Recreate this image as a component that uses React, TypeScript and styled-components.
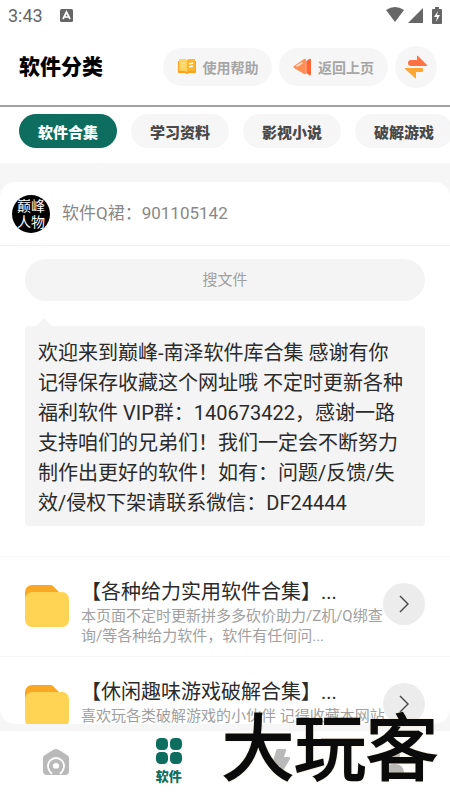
import React from "react";
import styled, { createGlobalStyle } from "styled-components";

const GlobalStyle = createGlobalStyle`
  * { box-sizing: border-box; }
  body {
    margin: 0;
    background: #fff;
    font-family: Roboto, "Noto Sans CJK SC", sans-serif;
    color: #2b2b2b;
  }
  button, input { font: inherit; border: 0; margin: 0; padding: 0; }
  svg { display: block; flex: none; }
`;

const Screen = styled.div`
  position: relative;
  display: flex;
  flex-direction: column;
  height: 100vh;
  overflow: hidden;
`;

const StatusBar = styled.div`
  display: flex;
  flex: none;
  align-items: center;
  height: 30px;
  padding: 0 8px;
  font-size: 18px;
  color: #666;
`;

const StatusIcons = styled.div`
  display: flex;
  align-items: center;
  gap: 4px;
  margin-left: auto;
`;

const StatusBadge = styled.div`
  margin-left: 17px;
`;

const BatterySlot = styled.div`
  margin-left: 5px;
`;

const Header = styled.header`
  display: flex;
  flex: none;
  align-items: center;
  gap: 7px;
  height: 77px;
  padding: 0 13px 2px 19px;
  border-bottom: 2px solid #a2a2a2;
`;

const PageTitle = styled.h1`
  flex: 1;
  margin: 0;
  font-size: 21px;
  line-height: 30px;
  font-weight: 900;
  color: #000;
  white-space: nowrap;
`;

const HeaderButton = styled.button`
  display: flex;
  align-items: center;
  justify-content: center;
  gap: 6px;
  width: 109px;
  height: 38px;
  border-radius: 19px;
  background: #f6f6f6;
  font-size: 14px;
  font-weight: 700;
  color: #a6a6a6;
  white-space: nowrap;
`;

const RoundButton = styled.button<{ $tone: string }>`
  display: flex;
  flex: none;
  align-items: center;
  justify-content: center;
  width: 42px;
  height: 42px;
  border-radius: 50%;
  background: ${(p) => p.$tone};
`;

const Tabs = styled.nav`
  display: flex;
  flex: none;
  gap: 14px;
  padding: 7px 0 15px 19px;
  overflow: hidden;
`;

const Tab = styled.button<{ $active?: boolean }>`
  flex: none;
  width: 98px;
  height: 34px;
  border-radius: 17px;
  font-size: 15px;
  font-weight: 900;
  background: ${(p) => (p.$active ? "#0d6e5f" : "#f6f6f6")};
  color: ${(p) => (p.$active ? "#fff" : "#4a4a4a")};
`;

const Content = styled.main`
  display: flex;
  flex: 1;
  min-height: 0;
  padding: 19px 0 7px;
  background: #f6f6f6;
`;

const Card = styled.section`
  flex: 1;
  min-width: 0;
  overflow: hidden;
  border-radius: 15px;
  background: #fff;
`;

const Owner = styled.div`
  display: flex;
  align-items: center;
  gap: 12px;
  height: 64px;
  padding: 0 12px;
  border-bottom: 1px solid #f1f1f1;
  font-size: 17px;
  color: #888;
`;

const Avatar = styled.div`
  display: flex;
  align-items: center;
  justify-content: center;
  width: 38px;
  height: 38px;
  border-radius: 50%;
  background: #000;
  color: #fff;
  font-size: 14px;
  line-height: 16px;
  text-align: center;
  overflow: hidden;
`;

const OwnerText = styled.div`
  padding-bottom: 4px;
`;

const Intro = styled.div`
  padding: 13px 25px 30px;
  border-bottom: 1px solid #f6f6f6;
`;

const Search = styled.input`
  display: block;
  width: 100%;
  height: 42px;
  border-radius: 21px;
  background: #f4f4f4;
  font-size: 15px;
  text-align: center;
  outline: 0;
  &::placeholder { color: #a0a0a0; opacity: 1; }
`;

const Notice = styled.p`
  position: relative;
  margin: 25px 0 0;
  padding: 12px 12px 8px 13px;
  border-radius: 4px;
  background: #f4f4f4;
  font-size: 20px;
  line-height: 30px;
  &::before {
    content: "";
    position: absolute;
    left: 11px;
    top: -8px;
    border: 8px solid transparent;
    border-top: 0;
    border-bottom-color: #f4f4f4;
  }
`;

const Entry = styled.article`
  display: flex;
  height: 100px;
  padding: 0 25px;
  border-bottom: 1px solid #f6f6f6;
`;

const EntryIcon = styled.div`
  margin-top: 28px;
`;

const EntryText = styled.div`
  flex: 1;
  min-width: 0;
  margin: 21px -4px 0 12px;
`;

const EntryTitle = styled.h2`
  margin: 0;
  font-size: 20px;
  line-height: 28px;
  font-weight: 400;
  white-space: nowrap;
`;

const EntryNote = styled.p`
  margin: 0;
  font-size: 15px;
  line-height: 20px;
  color: #a0a0a0;
`;

const EntryAction = styled.div`
  margin-top: 26px;
`;

const BottomNav = styled.nav`
  display: grid;
  flex: none;
  grid-template-columns: repeat(4, 1fr);
  height: 69px;
  background: #fff;
`;

const NavItem = styled.button<{ $active?: boolean }>`
  display: flex;
  flex-direction: column;
  align-items: center;
  justify-content: center;
  gap: 4px;
  padding-bottom: 7px;
  background: none;
  font-size: 13px;
  line-height: 18px;
  font-weight: 900;
  color: ${(p) => (p.$active ? "#0d6e5f" : "#b9b9b9")};
`;

const Watermark = styled.div`
  position: absolute;
  right: 12px;
  bottom: 10px;
  font-size: 72px;
  line-height: 80px;
  font-weight: 400;
  color: #0b0b0b;
  -webkit-text-stroke: 2px #0b0b0b;
  text-shadow: 0 0 3px #d9cc98;
  white-space: nowrap;
  pointer-events: none;
`;

const BookIcon = () => (
  <svg width="20" height="17" viewBox="0 0 20 17">
    <path d="M1 3h18v11a1 1 0 0 1-1 1h-6l-2 1-2-1H2a1 1 0 0 1-1-1z" fill="#ff9f1e" />
    <path d="M2 1h6l2 1v12l-2-1H3a1 1 0 0 1-1-1z" fill="#ffd35c" />
    <path d="M18 1h-6l-2 1v12l2-1h5a1 1 0 0 0 1-1z" fill="#ffb62c" />
    <path d="M4 5h4M4 8h4" stroke="#ffe9b0" strokeWidth="1.2" />
    <path d="m12 6 4-1M12 9l4-1" stroke="#fff" strokeWidth="1.4" />
  </svg>
);

const RewindIcon = () => (
  <svg width="19" height="18" viewBox="0 0 19 18">
    <path d="M7 8 16 1q2-1 2 1v14q0 2-2 1l-9-7z" fill="#ff6635" />
    <path d="M1 8 11 1q2-1 2 1v13q0 2-2 1L1 10q-1-1 0-2z" fill="#ff8f57" />
    <path d="m4 8 5-3" stroke="#ffe0cf" strokeWidth="1.5" strokeLinecap="round" />
    <path d="M13 3v12" stroke="#ffb08a" />
  </svg>
);

const SwapIcon = () => (
  <svg width="24" height="24" viewBox="0 0 24 24">
    <path d="M7 5h6V1q0-1 1 0l9 9q1 1-1 1H7a3 3 0 0 1 0-6z" fill="#ff7043" />
    <path d="M2 13h16a1 1 0 0 1 1 1v2a1 1 0 0 1-1 1h-6v6q0 1-1 0l-10-9q-1-1 1-1z" fill="#ffa534" />
  </svg>
);

const FolderIcon = () => (
  <svg width="44" height="42" viewBox="0 0 44 42">
    <path d="M0 7a7 7 0 0 1 7-7h18q2 0 3 1l8 8v13H0z" fill="#f9a825" />
    <rect y="7" width="44" height="35" rx="7" fill="#ffd454" />
  </svg>
);

const ChevronIcon = () => (
  <svg width="12" height="18" viewBox="0 0 12 18">
    <path d="m2 1 8 8-8 8" fill="none" stroke="#444" strokeWidth="1.4" />
  </svg>
);

const HomeIcon = () => (
  <svg width="26" height="26" viewBox="0 0 26 26">
    <path d="M10 1q3-2 6 0l8 5q2 1 2 3v13q0 4-4 4H4q-4 0-4-4V9q0-2 2-3z" fill="currentColor" />
    <path d="M9 25q-4-4-4-8a8 8 0 0 1 16 0q0 4-4 8" fill="none" stroke="#fff" strokeWidth="1.8" />
    <path d="m13 14 3 2-1 3h-4l-1-3z" fill="#fff" stroke="#fff" strokeLinejoin="round" />
  </svg>
);

const GridIcon = () => (
  <svg width="26" height="26" viewBox="0 0 26 26" fill="currentColor">
    <rect width="12" height="12" rx="4.5" />
    <rect x="14" width="12" height="12" rx="4.5" />
    <rect y="14" width="12" height="12" rx="4.5" />
    <rect x="14" y="14" width="12" height="12" rx="4.5" />
  </svg>
);

const BoltIcon = () => (
  <svg width="18" height="26" viewBox="0 0 18 26">
    <path d="M6 0h7q2 0 1 2l-2 6h5q2 0 1 2L9 25q-2 2-2-1l1-7H1q-1 0-1-2L4 2q0-2 2-2z" fill="currentColor" />
  </svg>
);

const UserIcon = () => (
  <svg width="22" height="26" viewBox="0 0 22 26" fill="currentColor">
    <circle cx="11" cy="7" r="6" />
    <path d="M1 24q0-9 10-9t10 9q0 1-2 1H3q-2 0-2-1z" />
  </svg>
);

const tabs = ["软件合集", "学习资料", "影视小说", "破解游戏"];

const entries = [
  {
    title: "【各种给力实用软件合集】...",
    note: "本页面不定时更新拼多多砍价助力/Z机/Q绑查询/等各种给力软件，软件有任何问...",
  },
  {
    title: "【休闲趣味游戏破解合集】...",
    note: "喜欢玩各类破解游戏的小伙伴 记得收藏本网站",
  },
];

export default function App() {
  return (
    <Screen>
      <GlobalStyle />
      <StatusBar>
        <span>3:43</span>
        <StatusBadge>
          <svg width="13" height="13" viewBox="0 0 13 13">
            <rect width="13" height="13" rx="1.5" fill="#666" />
            <path d="m3 10 3.5-7L10 10M4.5 8h4" fill="none" stroke="#fff" strokeWidth="1.7" />
          </svg>
        </StatusBadge>
        <StatusIcons>
          <svg width="18" height="16" viewBox="0 0 18 16">
            <path d="M0 3q9-6 18 0L9 15z" fill="#666" />
          </svg>
          <svg width="15" height="15" viewBox="0 0 15 15">
            <path d="M15 0v15H0z" fill="#666" />
          </svg>
          <BatterySlot>
            <svg width="10" height="17" viewBox="0 0 10 17">
              <path d="M1 2h2V0h4v2h2q1 0 1 1v13q0 1-1 1H1q-1 0-1-1V3q0-1 1-1z" fill="#666" />
              <path d="m6 4-4 6h3l-1 5 4-7H5z" fill="#fff" />
            </svg>
          </BatterySlot>
        </StatusIcons>
      </StatusBar>

      <Header>
        <PageTitle>软件分类</PageTitle>
        <HeaderButton><BookIcon />使用帮助</HeaderButton>
        <HeaderButton><RewindIcon />返回上页</HeaderButton>
        <RoundButton $tone="#f6f6f6" aria-label="切换"><SwapIcon /></RoundButton>
      </Header>

      <Tabs>
        {tabs.map((name, i) => (
          <Tab key={name} $active={i === 0}>{name}</Tab>
        ))}
      </Tabs>

      <Content>
        <Card>
          <Owner>
            <Avatar>巅峰<br />人物</Avatar>
            <OwnerText>软件Q裙：901105142</OwnerText>
          </Owner>
          <Intro>
            <Search type="text" placeholder="搜文件" aria-label="搜文件" />
            <Notice>
              欢迎来到巅峰-南泽软件库合集 感谢有你 记得保存收藏这个网址哦 不定时更新各种福利软件 VIP群：140673422，感谢一路支持咱们的兄弟们！我们一定会不断努力制作出更好的软件！如有：问题/反馈/失效/侵权下架请联系微信：DF24444
            </Notice>
          </Intro>
          {entries.map((entry) => (
            <Entry key={entry.title}>
              <EntryIcon><FolderIcon /></EntryIcon>
              <EntryText>
                <EntryTitle>{entry.title}</EntryTitle>
                <EntryNote>{entry.note}</EntryNote>
              </EntryText>
              <EntryAction>
                <RoundButton $tone="#ececec" aria-label="打开"><ChevronIcon /></RoundButton>
              </EntryAction>
            </Entry>
          ))}
        </Card>
      </Content>

      <BottomNav>
        <NavItem aria-label="首页"><HomeIcon /></NavItem>
        <NavItem $active><GridIcon />软件</NavItem>
        <NavItem aria-label="动态"><BoltIcon /></NavItem>
        <NavItem aria-label="我的"><UserIcon /></NavItem>
      </BottomNav>

      <Watermark>大玩客</Watermark>
    </Screen>
  );
}
